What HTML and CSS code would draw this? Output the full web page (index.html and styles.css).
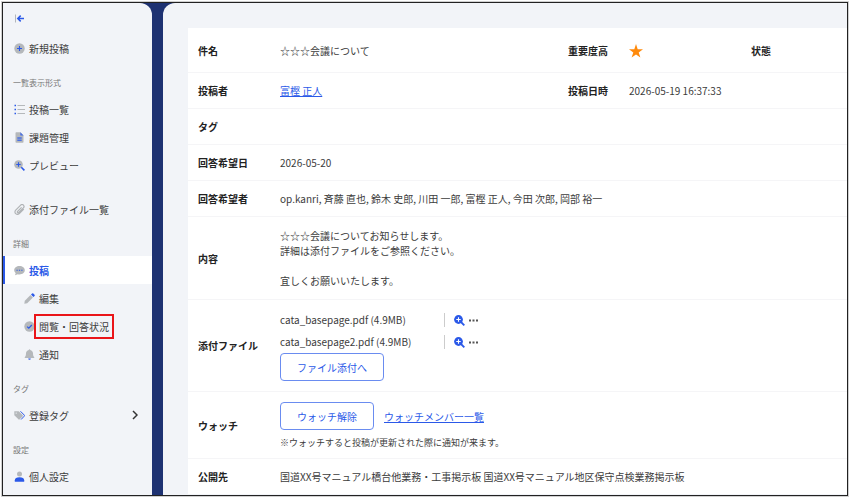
FILE: index.html
```html
<!DOCTYPE html>
<html lang="ja">
<head>
  <meta charset="UTF-8">
  <meta name="viewport" content="width=device-width, initial-scale=1.0">
  <title>☆☆☆会議について</title>
  <link rel="stylesheet" href="styles.css">
</head>
<body>
  <div class="frame">
    <nav class="sidebar">
      <button class="collapse" type="button" aria-label="メニューを閉じる">
        <svg class="icon" viewBox="0 0 11 11"><path d="M1.5 1.5v8" stroke="#b3b6bb" stroke-width="1" fill="none"/><path d="M10 5.5H4M6.7 2.6 3.8 5.5l2.9 2.9" stroke="#2b59e8" stroke-width="1.5" fill="none"/></svg>
      </button>
      <a class="item" href="#">
        <svg class="icon" viewBox="0 0 11 11"><circle cx="5.5" cy="5.5" r="5.2" fill="#b5b8bb"/><path d="M5.5 3v5M3 5.5h5" stroke="#2b59e8" stroke-width="1.1"/></svg>
        新規投稿
      </a>

      <h2 class="label">一覧表示形式</h2>
      <a class="item" href="#">
        <svg class="icon" viewBox="0 0 11 11"><path d="M3.5 1.5H11M3.5 5.5H11M3.5 9.5H11" stroke="#b5b8bb" stroke-width="1"/><path d="M.5 1.5H2M.5 5.5H2M.5 9.5H2" stroke="#2b59e8" stroke-width="1.5"/></svg>
        投稿一覧
      </a>
      <a class="item" href="#">
        <svg class="icon" viewBox="0 0 11 11"><path d="M2.3.3h4.2L9.5 3.3v6.6a.8.8 0 0 1-.8.8H2.3a.8.8 0 0 1-.8-.8V1.1a.8.8 0 0 1 .8-.8z" fill="#b5b8bb"/><path d="M6.3.3 9.5 3.5H6.3zM3.3 5.3h4.4v1.4H3.3zM3.3 7.4h4.4v1.6H3.3z" fill="#4a70e4"/></svg>
        課題管理
      </a>
      <a class="item" href="#">
        <svg class="icon" viewBox="0 0 11 11"><circle cx="4.5" cy="4.5" r="4.3" fill="#b5b8bb"/><path d="M4.5 2.3v4.4M2.3 4.5h4.4" stroke="#2b59e8" stroke-width="1.1"/><path d="m7.3 7.3 3.1 3.1" stroke="#2b59e8" stroke-width="1.6"/></svg>
        プレビュー
      </a>
      <a class="item item-attach" href="#">
        <svg class="icon" viewBox="0 0 11 11"><path d="m7.6 3.3-4 4a.8.8 0 0 0 1.2 1.2l4.6-4.7A1.9 1.9 0 0 0 6.7 1.1l-5 5a2.5 2.5 0 0 0 3.6 3.6l4.5-4.5" fill="none" stroke="#b0b3b6" stroke-width="1.2"/></svg>
        添付ファイル一覧
      </a>

      <h2 class="label">詳細</h2>
      <a class="item item-active" href="#">
        <svg class="icon" viewBox="0 0 11 11"><path d="M5.5 1c3 0 5.3 1.9 5.3 4.2S8.500 9.400 5.500 9.400c-.6 0-1.200-.1-1.700-.2L1 10.300l.7-2.200C.8 7.400.2 6.300.2 5.200.2 2.900 2.500 1 5.500 1z" fill="#b5b8bb"/><path d="M2.500 5.200h1.200M4.900 5.200h1.200M7.300 5.200h1.200" stroke="#2b59e8" stroke-width="1.100"/></svg>
        投稿
      </a>
      <div class="sublist">
        <a class="item" href="#">
          <svg class="icon" viewBox="0 0 11 11"><path d="M6.5 2.1 8.9 4.500 3.200 10.200.3 10.700.8 7.800z" fill="#b5b8bb"/><path d="M7 1.600 8.100.5a.8.8 0 0 1 1.200 0l1.200 1.200a.8.8 0 0 1 0 1.200L9.400 4z" fill="#2b59e8"/></svg>
          編集
        </a>
        <a class="item" href="#">
          <svg class="icon" viewBox="0 0 11 11"><circle cx="5.5" cy="5.5" r="5.2" fill="#b5b8bb"/><path d="m3.1 5.600 1.700 1.600 3-3.200" fill="none" stroke="#2b59e8" stroke-width="1.200"/></svg>
          <span class="marked">閲覧・回答状況</span>
        </a>
        <a class="item" href="#">
          <svg class="icon" viewBox="0 0 11 11"><path d="M5.5.2c.5 0 .7.3.7.7C7.900 1.200 9 2.600 9 4.300c0 2 .4 3 1.300 4.100v.6H.7v-.6C1.600 7.300 2 6.300 2 4.300 2 2.600 3.100 1.200 4.800.9c0-.4.2-.7.7-.7z" fill="#b5b8bb"/><path d="M4.200 9.500h2.600a1.300 1.300 0 0 1-2.600 0z" fill="#2b59e8"/></svg>
          通知
        </a>
      </div>

      <h2 class="label">タグ</h2>
      <a class="item" href="#">
        <svg class="icon" viewBox="0 0 11 11"><path d="M.3 1.200h3.900c.3 0 .6.1.8.3l3.600 3.600a.9.900 0 0 1 0 1.300L5.700 9.300a.9.900 0 0 1-1.300 0L.6 5.600a1 1 0 0 1-.3-.7z" fill="#b5b8bb"/><circle cx="2.2" cy="3.1" r=".7" fill="#f2f4f8"/><path d="m6.500 1.300 3.700 3.700a.9.900 0 0 1 0 1.200L7.100 9.500" fill="none" stroke="#2b59e8" stroke-width="1"/></svg>
        登録タグ
        <svg class="chevron" viewBox="0 0 6 10"><path d="m1 1 4 4-4 4" fill="none" stroke="#333" stroke-width="1.5"/></svg>
      </a>

      <h2 class="label">設定</h2>
      <a class="item" href="#">
        <svg class="icon" viewBox="0 0 11 11"><circle cx="5.5" cy="2.9" r="2.500" fill="#b5b8bb"/><path d="M.8 10.700V9.200c0-1.900 1.700-3 4.700-3s4.700 1.100 4.700 3v1.500z" fill="#2b59e8"/></svg>
        個人設定
      </a>
    </nav>

    <main class="main">
      <table class="detail">
        <colgroup>
          <col class="col-name">
          <col class="col-value">
          <col class="col-sub-name">
          <col class="col-sub-value">
          <col>
        </colgroup>
        <tr class="row-title">
          <th scope="row">件名</th>
          <td>☆☆☆会議について</td>
          <th scope="row">重要度高</th>
          <td><svg class="star" viewBox="0 0 14 14" role="img" aria-label="重要"><path d="m7 0 1.700 5.200H14L9.700 8.400l1.700 5.200L7 10.400l-4.400 3.200 1.700-5.200L0 5.200h5.300z" fill="#ff8a0c"/></svg></td>
          <th scope="row">状態</th>
        </tr>
        <tr>
          <th scope="row">投稿者</th>
          <td><a class="link" href="#">富樫 正人</a></td>
          <th scope="row">投稿日時</th>
          <td colspan="2">2026-05-19 16:37:33</td>
        </tr>
        <tr>
          <th scope="row">タグ</th>
          <td colspan="4"></td>
        </tr>
        <tr>
          <th scope="row">回答希望日</th>
          <td colspan="4">2026-05-20</td>
        </tr>
        <tr>
          <th scope="row">回答希望者</th>
          <td colspan="4">op.kanri, 斉藤 直也, 鈴木 史郎, 川田 一郎, 富樫 正人, 今田 次郎, 岡部 裕一</td>
        </tr>
        <tr>
          <th scope="row">内容</th>
          <td class="content" colspan="4">☆☆☆会議についてお知らせします。<br>詳細は添付ファイルをご参照ください。<br><br>宜しくお願いいたします。</td>
        </tr>
        <tr>
          <th scope="row">添付ファイル</th>
          <td class="files" colspan="4">
            <div class="file">
              <span class="file-name">cata_basepage.pdf (4.9MB)</span>
              <button class="icon-btn" type="button" aria-label="プレビュー"><svg class="icon" viewBox="0 0 11 11"><circle cx="4.500" cy="4.500" r="4.400" fill="#2b59e8"/><path d="m7 7 3.300 3.300" stroke="#2b59e8" stroke-width="1.800"/><path d="M4.500 2.300v4.400M2.300 4.500h4.400" stroke="#fff" stroke-width="1.100"/></svg></button>
              <button class="icon-btn" type="button" aria-label="メニュー"><svg class="dots" viewBox="0 0 9 3"><path d="M0 .5h2v2H0zM3.500.5h2v2h-2zM7 .5h2v2H7z" fill="#555"/></svg></button>
            </div>
            <div class="file">
              <span class="file-name">cata_basepage2.pdf (4.9MB)</span>
              <button class="icon-btn" type="button" aria-label="プレビュー"><svg class="icon" viewBox="0 0 11 11"><circle cx="4.500" cy="4.500" r="4.400" fill="#2b59e8"/><path d="m7 7 3.300 3.300" stroke="#2b59e8" stroke-width="1.800"/><path d="M4.500 2.300v4.400M2.300 4.500h4.400" stroke="#fff" stroke-width="1.100"/></svg></button>
              <button class="icon-btn" type="button" aria-label="メニュー"><svg class="dots" viewBox="0 0 9 3"><path d="M0 .5h2v2H0zM3.500.5h2v2h-2zM7 .5h2v2H7z" fill="#555"/></svg></button>
            </div>
            <button class="btn" type="button">ファイル添付へ</button>
          </td>
        </tr>
        <tr>
          <th scope="row">ウォッチ</th>
          <td class="watch" colspan="4">
            <div class="watch-actions">
              <button class="btn" type="button">ウォッチ解除</button>
              <a class="link" href="#">ウォッチメンバー一覧</a>
            </div>
            <p class="note">※ウォッチすると投稿が更新された際に通知が来ます。</p>
          </td>
        </tr>
        <tr>
          <th scope="row">公開先</th>
          <td colspan="4">国道XX号マニュアル橋台他業務・工事掲示板 国道XX号マニュアル地区保守点検業務掲示板</td>
        </tr>
      </table>
    </main>
  </div>
</body>
</html>
```

FILE: styles.css
```css
* {
  box-sizing: border-box;
}
body {
  margin: 0;
  padding: 2px;
  background: #fff;
  color: #3c3c3c;
  font-family: "Noto Sans CJK JP", sans-serif;
  font-size: 10px;
  line-height: 15px;
}
button {
  font: inherit;
  cursor: pointer;
}
.frame {
  display: flex;
  gap: 11px;
  min-height: calc(100vh - 4px);
  border: 1px solid #222;
  background: #1e3272;
  box-shadow: 0 0 0 1px #d0d0d0;
}

/* sidebar */
.sidebar {
  flex: 0 0 149px;
  background: #f2f4f8;
  border-top-right-radius: 12px;
}
.collapse {
  display: flex;
  align-items: center;
  height: 31px;
  padding: 0 11px;
  border: none;
  background: none;
}
.icon {
  display: block;
  flex: none;
  width: 11px;
  height: 11px;
}
.item {
  display: flex;
  align-items: center;
  gap: 4px;
  height: 28px;
  padding: 0 14px 0 9px;
  border-left: 2px solid transparent;
  color: #3c3c3c;
  text-decoration: none;
}
.item-attach {
  margin-top: 16px;
}
.item-active {
  border-left-color: #2b59e8;
  background: #fff;
  color: #2b59e8;
  font-weight: bold;
}
.sublist .item {
  padding-left: 19px;
}
.label {
  margin: 13px 0 4px;
  padding-left: 10px;
  color: #777;
  font-size: 8px;
  font-weight: normal;
  line-height: 16px;
}
.marked {
  position: relative;
}
.marked::after {
  content: "";
  position: absolute;
  inset: -5px;
  border: 2px solid #ea1519;
}
.chevron {
  width: 6px;
  height: 10px;
  margin-left: auto;
}

/* detail */
.main {
  flex: 1;
  min-width: 0;
  padding: 25px 0 0 25px;
  background: #f2f4f8;
  border-top-left-radius: 12px;
}
.detail {
  width: 100%;
  table-layout: fixed;
  border-collapse: separate;
  border-spacing: 0;
  background: #fff;
}
.col-name {
  width: 82px;
}
.col-value {
  width: 288px;
}
.col-sub-name {
  width: 61px;
}
.col-sub-value {
  width: 122px;
}
.detail th,
.detail td {
  padding: 10px 0 10px 10px;
  border-bottom: 1px solid #f5f5f7;
  text-align: left;
  vertical-align: middle;
}
.detail th {
  color: #222;
}
.detail .row-title th,
.detail .row-title td {
  padding: 15px 0 14px 10px;
}
.detail tr:last-child th,
.detail tr:last-child td {
  border-bottom: none;
}
.detail .content {
  padding: 11px 0 11px 10px;
}
.detail .files {
  padding: 9px 0 10px 10px;
}
.detail .watch {
  padding: 10px 0 8px 10px;
}
.link {
  color: #2b59e8;
  text-decoration: underline;
}
.star {
  display: block;
  width: 14px;
  height: 14px;
}
.file {
  display: flex;
  align-items: center;
  gap: 4px;
  height: 22px;
}
.file-name {
  flex: 0 0 165px;
  margin-right: 5px;
  border-right: 1px solid #ccc;
  line-height: 14px;
}
.icon-btn {
  padding: 0;
  border: none;
  background: none;
}
.dots {
  display: block;
  width: 9px;
  height: 3px;
}
.btn {
  height: 28px;
  padding: 0 16px;
  border: 1px solid #6a8cf0;
  border-radius: 4px;
  background: #fff;
  color: #2b59e8;
}
.watch-actions {
  display: flex;
  align-items: center;
  gap: 10px;
}
.note {
  margin: 5px 0 0;
  font-size: 9px;
}
```
